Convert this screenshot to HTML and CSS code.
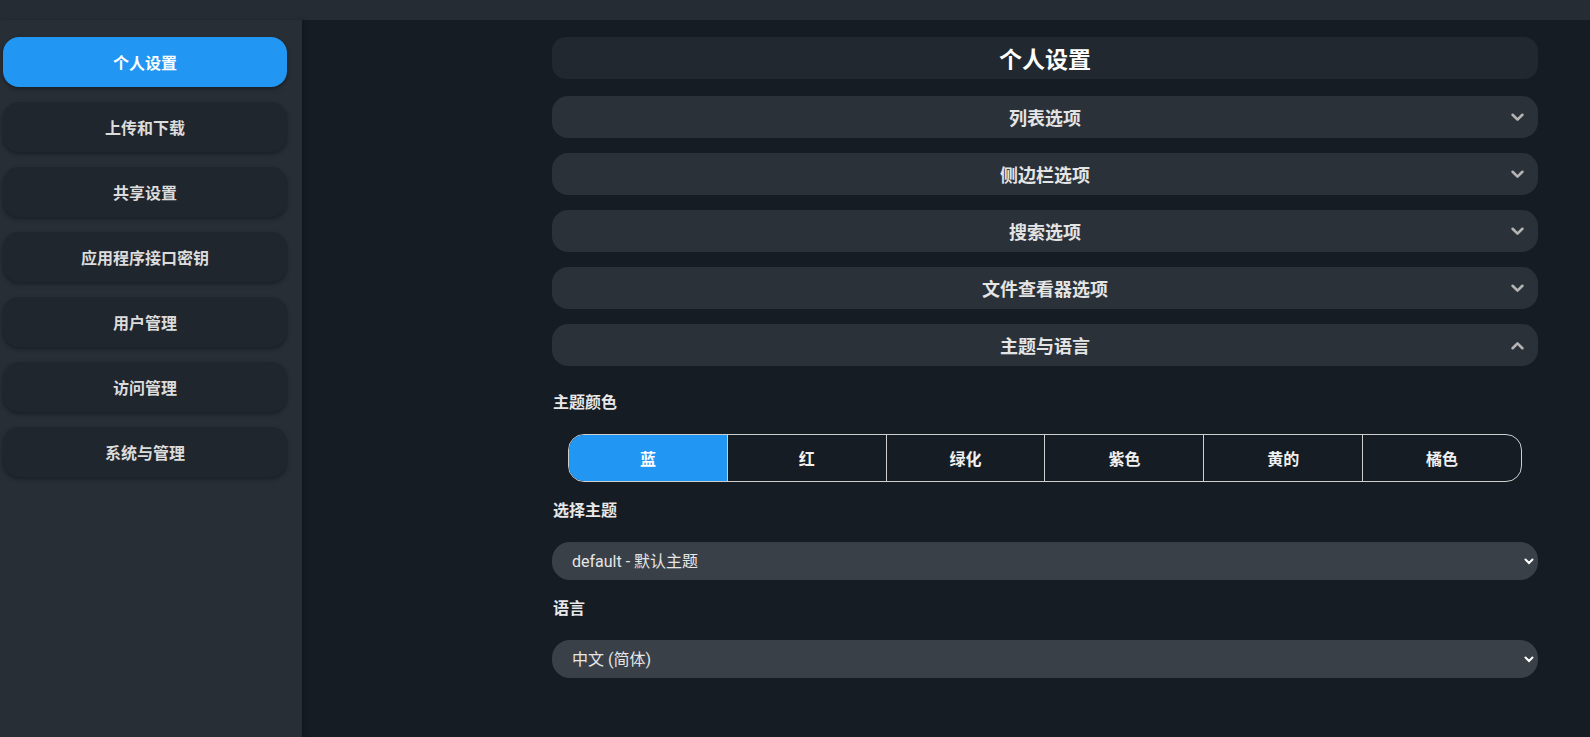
FILE: index.html
```html
<!DOCTYPE html>
<html lang="zh-CN">
<head>
  <meta charset="UTF-8" />
  <meta name="viewport" content="width=device-width, initial-scale=1.0"/>
  <title>个人设置</title>
  <link rel="stylesheet" href="styles.css">
</head>
<body>
  <div class="topbar"></div>

  <div class="layout">
    <nav class="sidebar">
      <button class="nav-btn active">个人设置</button>
      <button class="nav-btn">上传和下载</button>
      <button class="nav-btn">共享设置</button>
      <button class="nav-btn">应用程序接口密钥</button>
      <button class="nav-btn">用户管理</button>
      <button class="nav-btn">访问管理</button>
      <button class="nav-btn">系统与管理</button>
    </nav>

    <main class="main">
      <div class="title-card">个人设置</div>

      <div class="section">
        <span>列表选项</span>
        <svg class="chevron" viewBox="0 0 12 8"><path d="M1.5 1.5 L6 6 L10.5 1.5"/></svg>
      </div>
      <div class="section">
        <span>侧边栏选项</span>
        <svg class="chevron" viewBox="0 0 12 8"><path d="M1.5 1.5 L6 6 L10.5 1.5"/></svg>
      </div>
      <div class="section">
        <span>搜索选项</span>
        <svg class="chevron" viewBox="0 0 12 8"><path d="M1.5 1.5 L6 6 L10.5 1.5"/></svg>
      </div>
      <div class="section">
        <span>文件查看器选项</span>
        <svg class="chevron" viewBox="0 0 12 8"><path d="M1.5 1.5 L6 6 L10.5 1.5"/></svg>
      </div>
      <div class="section">
        <span>主题与语言</span>
        <svg class="chevron" viewBox="0 0 12 8"><path d="M1.5 6.5 L6 2 L10.5 6.5"/></svg>
      </div>

      <div class="field-label first">主题颜色</div>
      <div class="color-group">
        <button class="color-btn active">蓝</button>
        <button class="color-btn">红</button>
        <button class="color-btn">绿化</button>
        <button class="color-btn">紫色</button>
        <button class="color-btn">黄的</button>
        <button class="color-btn">橘色</button>
      </div>

      <div class="field-label">选择主题</div>
      <select class="select">
        <option>default - 默认主题</option>
      </select>

      <div class="field-label">语言</div>
      <select class="select">
        <option>中文 (简体)</option>
      </select>
    </main>
  </div>
</body>
</html>
```

FILE: styles.css
```css
body {
  margin: 0;
  font-family: Roboto, "Noto Sans CJK SC", sans-serif;
  background-color: #161c23;
  color: #e2e2e2;
  overflow: hidden;
}

.topbar {
  height: 20px;
  background-color: #262c34;
}

.layout {
  display: flex;
  height: calc(100vh - 20px);
}

.sidebar {
  width: 302px;
  background-color: #282e36;
  box-shadow: 3px 0 4px rgba(0, 0, 0, 0.15);
  padding: 17px 15px 0 3px;
  box-sizing: border-box;
  display: flex;
  flex-direction: column;
  gap: 15px;
}

.nav-btn {
  height: 50px;
  border: none;
  border-radius: 16px;
  background-color: #20262d;
  box-shadow: 0 2px 4px rgba(0, 0, 0, 0.35);
  color: #dcdcdc;
  font-family: inherit;
  font-size: 16px;
  font-weight: bold;
  cursor: pointer;
}

.nav-btn.active {
  background-color: #2196f3;
  color: #fff;
}

.main {
  flex: 1;
  padding: 17px 52px 0 250px;
  display: flex;
  flex-direction: column;
}

.title-card {
  height: 42px;
  border-radius: 14px;
  background-color: #212830;
  display: flex;
  align-items: center;
  justify-content: center;
  font-size: 23px;
  font-weight: bold;
  color: #fff;
}

.section {
  position: relative;
  margin-top: 17px;
  height: 42px;
  border-radius: 16px;
  background-color: #2a3139;
  display: flex;
  align-items: center;
  justify-content: center;
  font-size: 18px;
  font-weight: bold;
  color: #e4e4e4;
}

.section + .section {
  margin-top: 15px;
}

.chevron {
  position: absolute;
  right: 14px;
  top: 17px;
  width: 13px;
  height: 9px;
  fill: none;
  stroke: #b4b4b4;
  stroke-width: 2.4;
  stroke-linecap: round;
  stroke-linejoin: round;
}

.field-label {
  margin-top: 18px;
  margin-bottom: 20px;
  padding-left: 1px;
  line-height: 22px;
  font-size: 16px;
  font-weight: bold;
  color: #e8e8e8;
}

.field-label.first {
  margin-top: 26px;
}

.color-group {
  margin: 0 16px;
  height: 48px;
  display: flex;
  border: 1px solid #cfcfcf;
  border-radius: 16px;
  overflow: hidden;
  box-sizing: border-box;
}

.color-btn {
  flex: 1;
  border: none;
  border-left: 1px solid #cfcfcf;
  background: transparent;
  color: #f0f0f0;
  font-family: inherit;
  font-size: 16px;
  font-weight: bold;
}

.color-btn:first-child {
  border-left: none;
}

.color-btn.active {
  background-color: #2196f3;
  color: #fff;
}

.select {
  appearance: none;
  height: 38px;
  border: none;
  border-radius: 18px;
  background-color: #3a4047;
  background-image: url("data:image/svg+xml;utf8,<svg xmlns='http://www.w3.org/2000/svg' viewBox='0 0 10 7'><path d='M1.5 1.5 L5 5 L8.5 1.5' fill='none' stroke='white' stroke-width='2' stroke-linecap='round'/></svg>");
  background-repeat: no-repeat;
  background-position: right 4px center;
  background-size: 10px 7px;
  padding: 0 20px;
  color: #e6e6e6;
  font-family: inherit;
  font-size: 16px;
}
```
